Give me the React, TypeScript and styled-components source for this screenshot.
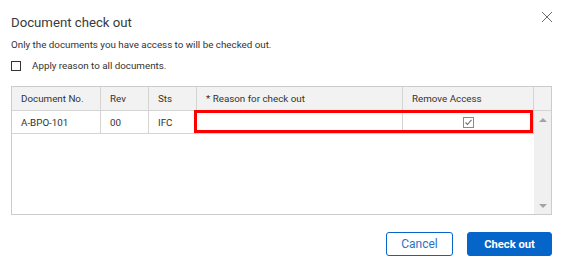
import * as React from "react";
import styled, { createGlobalStyle } from "styled-components";

const GlobalStyle = createGlobalStyle`
  html, body {
    margin: 0;
    padding: 0;
    background: #ffffff;
  }
  body {
    font-family: Roboto, "Liberation Sans", Arial, sans-serif;
    color: #333333;
  }
`;

const Dialog = styled.div`
  width: 564px;
  height: 267px;
  box-sizing: border-box;
  padding: 14px 12px 0 11px;
  display: flex;
  flex-direction: column;
`;

const TitleBar = styled.div`
  display: flex;
  justify-content: space-between;
  align-items: flex-start;
  height: 23px;
`;

const Title = styled.h1`
  margin: 0;
  font-size: 13.2px;
  font-weight: 400;
  line-height: 18px;
  color: #3a3a3a;
`;

const CloseButton = styled.button`
  border: 0;
  background: none;
  padding: 0;
  margin: -3px -1px 0 0;
  width: 12px;
  height: 12px;
  cursor: pointer;
  display: flex;
`;

const Subtitle = styled.p`
  margin: 0;
  font-size: 9.8px;
  line-height: 16px;
  color: #333333;
`;

const ApplyRow = styled.label`
  display: flex;
  align-items: center;
  gap: 11px;
  margin-top: 6px;
  font-size: 9.8px;
  line-height: 14px;
  color: #333333;
`;

const Box = styled.span`
  width: 8px;
  height: 8px;
  border: 1px solid #333333;
  display: inline-block;
`;

const Table = styled.div`
  margin-top: 13px;
  border: 1px solid #cccccc;
  height: 127px;
  display: flex;
  flex-direction: column;
`;

const HeadRow = styled.div`
  display: flex;
  height: 23px;
  background: #f2f2f2;
  border-bottom: 1px solid #d4d4d4;
`;

const Cell = styled.div<{ $w: number; $last?: boolean }>`
  width: ${(p) => p.$w}px;
  flex: none;
  box-sizing: border-box;
  padding-left: 9px;
  display: flex;
  align-items: center;
  font-size: 9.8px;
  color: #333333;
  border-right: ${(p) => (p.$last ? "none" : "1px solid #d4d4d4")};
`;

const Body = styled.div`
  flex: 1;
  display: flex;
  min-height: 0;
`;

const Rows = styled.div`
  flex: 1;
`;

const DataRow = styled.div`
  position: relative;
  display: flex;
  height: 22px;
  border-bottom: 1px solid #d4d4d4;
`;

const Highlight = styled.div`
  position: absolute;
  left: 182px;
  top: -1px;
  width: 339px;
  height: 23px;
  box-sizing: border-box;
  border: 3px solid #ff0000;
  pointer-events: none;
`;

const CenterCell = styled(Cell)`
  justify-content: center;
  padding-left: 0;
`;

const Scrollbar = styled.div`
  width: 18px;
  background: #f0f0f0;
  display: flex;
  flex-direction: column;
  justify-content: space-between;
  align-items: center;
  padding: 7px 0 6px;
`;

const Arrow = styled.span<{ $up?: boolean }>`
  width: 0;
  height: 0;
  border-left: 4px solid transparent;
  border-right: 4px solid transparent;
  ${(p) =>
    p.$up
      ? "border-bottom: 4px solid #a3a3a3;"
      : "border-top: 4px solid #a3a3a3;"}
`;

const Footer = styled.div`
  display: flex;
  justify-content: flex-end;
  gap: 14px;
  margin-top: 17px;
`;

const Button = styled.button<{ $primary?: boolean }>`
  height: 24px;
  box-sizing: border-box;
  border-radius: 3px;
  border: 1px solid #0565c8;
  font-family: Roboto, "Liberation Sans", Arial, sans-serif;
  font-size: ${(p) => (p.$primary ? "11.2px" : "12px")};
  cursor: pointer;
  padding: 0;
  width: ${(p) => (p.$primary ? "85px" : "67px")};
  background: ${(p) => (p.$primary ? "#0565c8" : "#ffffff")};
  color: ${(p) => (p.$primary ? "#ffffff" : "#2a72c4")};
  font-weight: ${(p) => (p.$primary ? 700 : 400)};
`;

const cols = [
  { label: "Document No.", w: 89 },
  { label: "Rev", w: 48 },
  { label: "Sts", w: 48 },
  { label: "* Reason for check out", w: 206 },
  { label: "Remove Access", w: 131 },
];

function CheckedBox() {
  return (
    <svg width={11} height={11} viewBox="0 0 11 11">
      <rect x={0.5} y={0.5} width={10} height={10} fill="#fff" stroke="#8a8a8a" />
      <path d="M2.5 5.5 L4.5 7.5 L8.5 2.8" fill="none" stroke="#6f6f6f" strokeWidth={1.1} />
    </svg>
  );
}

export default function App() {
  return (
    <>
      <GlobalStyle />
      <Dialog>
        <TitleBar>
          <Title>Document check out</Title>
          <CloseButton aria-label="Close">
            <svg width={12} height={12} viewBox="0 0 12 12">
              <path d="M1 1 L11 11 M11 1 L1 11" stroke="#6a6a6a" strokeWidth={1} />
            </svg>
          </CloseButton>
        </TitleBar>
        <Subtitle>Only the documents you have access to will be checked out.</Subtitle>
        <ApplyRow>
          <Box />
          Apply reason to all documents.
        </ApplyRow>
        <Table>
          <HeadRow>
            {cols.map((c) => (
              <Cell key={c.label} $w={c.w}>
                {c.label}
              </Cell>
            ))}
            <Cell $w={18} $last />
          </HeadRow>
          <Body>
            <Rows>
              <DataRow>
                <Cell $w={89}>A-BPO-101</Cell>
                <Cell $w={48}>00</Cell>
                <Cell $w={48}>IFC</Cell>
                <Cell $w={206} />
                <CenterCell $w={131}>
                  <CheckedBox />
                </CenterCell>
                <Highlight />
              </DataRow>
            </Rows>
            <Scrollbar>
              <Arrow $up />
              <Arrow />
            </Scrollbar>
          </Body>
        </Table>
        <Footer>
          <Button>Cancel</Button>
          <Button $primary>Check out</Button>
        </Footer>
      </Dialog>
    </>
  );
}
